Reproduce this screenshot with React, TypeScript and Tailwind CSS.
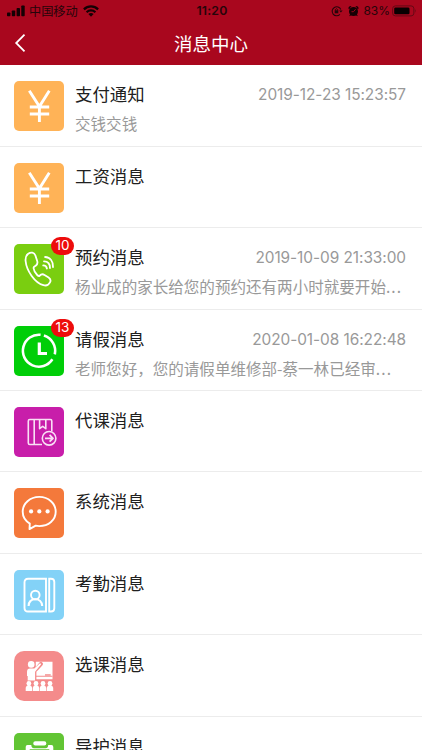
import type { ReactNode } from "react";

interface Message {
  title: string;
  icon: ReactNode;
  color: string;
  time?: string;
  text?: string;
  badge?: number;
}

function YuanIcon() {
  return (
    <svg viewBox="0 0 50 50" className="h-full w-full" fill="none" stroke="#fff" strokeWidth="2.9">
      <path d="M15.3 9.7L25.4 25.5L35.3 9.7M25.4 25V41M15.8 26H35.2M15.8 33H35.2" />
    </svg>
  );
}

function PhoneIcon() {
  return (
    <svg viewBox="0 0 50 50" className="h-full w-full" fill="none" stroke="#fff" strokeWidth="1.8" strokeLinecap="round" strokeLinejoin="round">
      <path d="M14.2 9.7C12.2 11.2 11.3 14 11.6 17C12.5 26.5 20.5 38.5 29.4 41.2C32 42 34.7 40.8 36 38.4C37 36.5 36.3 34.6 34.6 33.4L30.5 30.9C28.7 29.8 26.9 30.3 25.7 31.7C25 32.3 24 31.8 23.2 31C21.2 29 19.8 26.5 19.5 24C19.4 23 20.5 22.5 21.7 21.7C23.3 20.6 23.8 19 23.2 17.1L21.4 11.5C20.3 8.2 16.8 7.8 14.2 9.7Z" />
      <path d="M29.2 21.4C31.4 21.4 32.6 22.4 32.9 24.5M30 17.3C34 17.3 36 19.8 36 24M31.1 13C36.3 13.3 39.2 17.3 39 23" strokeWidth="1.8" />
    </svg>
  );
}

function ClockIcon() {
  return (
    <svg viewBox="0 0 50 50" className="h-full w-full" fill="none" stroke="#fff">
      <path d="M26.6 8.8A16 16 0 1 0 38.4 33.3M29.9 9.6A16 16 0 0 1 40.8 28.4" strokeWidth="2.6" />
      <path d="M25.3 16.5V27.5H33" strokeWidth="3.2" />
    </svg>
  );
}

function BookIcon() {
  return (
    <svg viewBox="0 0 50 50" className="h-full w-full" fill="none" stroke="#f9e0f5" strokeWidth="1.6" strokeLinejoin="round">
      <path d="M28 37.5H15.8Q14.3 37.5 14.3 36V14Q14.3 12.5 15.8 12.5H36.3Q37.8 12.5 37.8 14V24.3" />
      <path d="M20.2 12.5V37.5M25.6 12.7V21.7L28.7 19.4L31.8 21.7V12.7" />
      <circle cx="35.1" cy="31.3" r="6.8" />
      <path d="M31 31.3H39M35.6 27.9L39 31.3L35.6 34.7" strokeWidth="1.8" />
    </svg>
  );
}

function ChatIcon() {
  return (
    <svg viewBox="0 0 50 50" className="h-full w-full" fill="none" stroke="#fff" strokeWidth="1.9" strokeLinejoin="round">
      <path d="M15.8 35.6C11.4 32.9 8.7 28.6 8.7 23.8C8.7 15.5 16 8.9 25.3 8.9C34.6 8.9 41.7 15.5 41.7 23.8C41.7 32 34.6 38.1 25.3 38.1C24 38.1 22.8 38 21.7 37.7L15.5 41.1Z" />
      <g fill="#fff" stroke="none">
        <circle cx="17.1" cy="23.4" r="2.1" />
        <circle cx="25.3" cy="23.4" r="2.1" />
        <circle cx="33.6" cy="23.4" r="2.1" />
      </g>
    </svg>
  );
}

function ContactIcon() {
  return (
    <svg viewBox="0 0 50 50" className="h-full w-full" fill="none" stroke="#fff" strokeWidth="1.9">
      <path d="M32 8.7H14Q10.5 8.7 10.5 12.2V38Q10.5 41.5 14 41.5H32Z" />
      <path d="M35.2 8.7H37Q40.3 8.7 40.3 12V38.2Q40.3 41.5 37 41.5H35.2Z" />
      <circle cx="21.3" cy="25" r="4.3" />
      <path d="M14.6 36C14.8 31.7 17.5 29.3 21.3 29.3C25.1 29.3 28 31.7 28.2 36" strokeWidth="2.1" />
    </svg>
  );
}

function TeacherIcon() {
  return (
    <svg viewBox="0 0 50 50" className="h-full w-full" fill="#fff">
      <path d="M21.8 10.8H38.5V28.2H21.8Z" />
      <path d="M21 19.4L23.2 17.2L27 12.9" fill="none" stroke="#f48b8b" strokeWidth="4" strokeLinecap="round" />
      <circle cx="17.2" cy="13.4" r="3.3" />
      <path d="M13 21Q13 17.6 16 17.6H20.3L25.7 12.6Q27.3 12 27 13.6L21.2 20.6V29.6H13.7V25H13Z" />
      <path d="M31 23.2H36.7V24.6H31ZM22.3 24.8H38.5V25.8H22.3ZM21.2 21H22.4V29H21.2Z" fill="#f48b8b" />
      {[14.9, 22, 29, 36].map((x) => (
        <g key={x}>
          <circle cx={x} cy="32.5" r="2.4" />
          <path d={`M${x - 3.2} 39.9V36.8Q${x - 3.1} 34.7 ${x} 33.8Q${x + 3.1} 34.7 ${x + 3.2} 36.8V39.9Z`} />
        </g>
      ))}
    </svg>
  );
}

function ClipboardIcon() {
  return (
    <svg viewBox="0 0 50 50" className="h-full w-full" fill="#fff">
      <path
        fillRule="evenodd"
        d="M13.5 12H17.3Q17.5 15.3 20 15.3H31.5Q34 15.3 34.2 12H37.5Q39.3 12 39.3 14V43H11.7V14Q11.7 12 13.5 12ZM15.7 16.3V39H35.3V16.3Z"
      />
      <rect x="19.3" y="8.2" width="13" height="4.4" rx="2" />
    </svg>
  );
}

const messages: Message[] = [
  { title: "支付通知", icon: <YuanIcon />, color: "bg-[#ffb357] rounded-[5px]", time: "2019-12-23 15:23:57", text: "交钱交钱" },
  { title: "工资消息", icon: <YuanIcon />, color: "bg-[#ffb357] rounded-[5px]" },
  { title: "预约消息", icon: <PhoneIcon />, color: "bg-[#7ace10] rounded-[5px]", time: "2019-10-09 21:33:00", text: "杨业成的家长给您的预约还有两小时就要开始...", badge: 10 },
  { title: "请假消息", icon: <ClockIcon />, color: "bg-[#00ce08] rounded-[5px]", time: "2020-01-08 16:22:48", text: "老师您好，您的请假单维修部-蔡一林已经审...", badge: 13 },
  { title: "代课消息", icon: <BookIcon />, color: "bg-[#c81eaa] rounded-[5px]" },
  { title: "系统消息", icon: <ChatIcon />, color: "bg-[#f4793b] rounded-[5px]" },
  { title: "考勤消息", icon: <ContactIcon />, color: "bg-[#83d2f7] rounded-[5px]" },
  { title: "选课消息", icon: <TeacherIcon />, color: "bg-[#f48b8b] rounded-[10px]" },
  { title: "导护消息", icon: <ClipboardIcon />, color: "bg-[#62c534] rounded-[5px]" },
];

function StatusBar() {
  return (
    <div className="flex h-[22px] items-center justify-between pl-[7px] pr-[5px] text-[#26050a]">
      <div className="flex w-[153px] items-center">
        <svg width="18" height="12" viewBox="0 0 18 12" fill="#150104">
          <rect y="7.5" width="3.4" height="3.7" rx="0.8" />
          <rect x="4.8" y="5.5" width="3.4" height="5.7" rx="0.8" />
          <rect x="9.6" y="3" width="3.4" height="8.2" rx="0.8" />
          <rect x="14.3" y="0.5" width="3.4" height="10.7" rx="0.8" />
        </svg>
        <span className="ml-[4px] text-[12.2px] leading-[22px]">中国移动</span>
        <svg className="ml-[5px]" width="16" height="12" viewBox="0 0 16 12" fill="none" stroke="#150104" strokeWidth="2.2">
          <path d="M0.9 4.4C4.9 0.4 11.1 0.4 15.1 4.4M3.6 7.2C6.1 4.8 9.9 4.8 12.4 7.2" />
          <path d="M8 11.7L5.4 9.1Q8 7 10.6 9.1Z" fill="#150104" stroke="none" />
        </svg>
      </div>
      <span className="font-['Inter','Noto_Sans_CJK_SC',sans-serif] text-[12.3px] font-semibold tracking-[0.2px]">11:20</span>
      <div className="flex w-[153px] items-center justify-end">
        <svg width="12" height="12" viewBox="0 0 12 12" fill="none" stroke="#26050a" strokeWidth="1.1">
          <path d="M8.9 9.4A4.5 4.5 0 1 1 9.8 4.5" />
          <path d="M8.2 5.4H11.6L9.9 7.6Z" fill="#26050a" stroke="none" />
          <rect x="3.7" y="5.3" width="3.6" height="3" fill="#26050a" stroke="none" />
          <path d="M4.4 5.5V4.6Q5.5 2.8 6.6 4.6V5.5" strokeWidth="0.9" />
        </svg>
        <svg className="ml-[5px]" width="11" height="12" viewBox="0 0 11 12" fill="#150104">
          <circle cx="5.5" cy="6.5" r="4.5" />
          <path d="M0.5 3.8Q0.2 0.8 3.5 1L1.2 4.2ZM10.5 3.8Q10.8 0.8 7.5 1L9.8 4.2ZM1.2 11.2L2.4 8.6L4 10ZM9.8 11.2L8.6 8.6L7 10Z" />
          <path d="M7.6 4.2L5.5 6.7H3.5" fill="none" stroke="#a9071e" strokeWidth="0.9" />
        </svg>
        <span className="ml-[4px] font-['Inter','Noto_Sans_CJK_SC',sans-serif] text-[12px] leading-[22px]">83%</span>
        <svg className="ml-[2px]" width="25" height="12" viewBox="0 0 25 12" fill="none">
          <rect x="0.6" y="0.9" width="21.3" height="10" rx="2.8" stroke="#650915" />
          <rect x="2.2" y="2.5" width="15.3" height="6.8" rx="1.3" fill="#080001" />
          <path d="M23.2 4.1Q24.6 5.9 23.2 7.7Z" fill="#650915" />
        </svg>
      </div>
    </div>
  );
}

function MessageRow({ message }: { message: Message }) {
  return (
    <li className="flex h-[81.45px] shrink-0 border-b border-[#ececec] pt-4 pl-[14px] pr-4">
      <div className="relative h-[50px] w-[50px] shrink-0">
        <div className={`h-full w-full overflow-hidden ${message.color}`}>{message.icon}</div>
        {message.badge && (
          <span className="absolute -top-[7px] left-[37px] flex h-[18px] w-[23px] items-center justify-center rounded-full bg-[#ed0c0c] font-['Inter',sans-serif] text-[13.5px] leading-none text-white">
            {message.badge}
          </span>
        )}
      </div>
      <div className="-mt-px ml-[11px] min-w-0 flex-1">
        <div className="flex h-[27px] items-center justify-between whitespace-nowrap">
          <h2 className="text-[17.4px] leading-[27px] text-[#202020]">{message.title}</h2>
          {message.time && (
            <time className="pt-[2px] font-['Inter',sans-serif] text-[15.4px] leading-[27px] tracking-[-0.05px] text-[#999]">{message.time}</time>
          )}
        </div>
        {message.text && (
          <p className="mt-[3px] whitespace-nowrap text-[15.55px] leading-[26px] text-[#999]">
            {message.text.replace("...", "")}
            {message.text.endsWith("...") && <span className="tracking-[1.1px]">...</span>}
          </p>
        )}
      </div>
    </li>
  );
}

export default function App() {
  return (
    <div className="flex h-[750px] w-full flex-col overflow-hidden bg-white font-['Noto_Sans_CJK_SC',sans-serif]">
      <header className="h-[65.3px] shrink-0 bg-[#a9071e]">
        <StatusBar />
        <div className="grid h-[42px] grid-cols-[60px_1fr_60px] items-center">
          <button type="button" aria-label="返回" className="pl-[14px]">
            <svg width="12" height="20" viewBox="0 0 12 20" fill="none" stroke="#fff" strokeWidth="1.8">
              <path d="M10.5 1.7L2.2 10L10.5 18.3" />
            </svg>
          </button>
          <h1 className="text-center text-[18.5px] leading-[40px] text-white">消息中心</h1>
        </div>
      </header>
      <ul>
        {messages.map((message) => (
          <MessageRow key={message.title} message={message} />
        ))}
      </ul>
    </div>
  );
}
